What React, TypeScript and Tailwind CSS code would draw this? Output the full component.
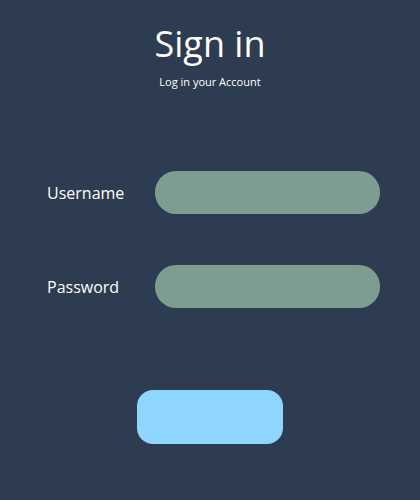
export default function App() {
  return (
    <div className="w-[420px] h-[500px] bg-[#2d3c50] flex flex-col items-center text-white" style={{ fontFamily: '"Open Sans", sans-serif' }}>
      <h1 className="mt-[20px] text-[36px] leading-[48px] font-normal">Sign in</h1>
      <p className="mt-[6px] text-[11px] leading-[15px]">Log in your Account</p>
      <div className="mt-[82px] w-full flex flex-col gap-[51px]">
        <div className="flex items-center pl-[47px] pr-[40px]">
          <span className="w-[108px] text-[16px]">Username</span>
          <input className="w-[225px] h-[43px] rounded-[21px] bg-[#7f9c90] outline-none" />
        </div>
        <div className="flex items-center pl-[47px] pr-[40px]">
          <span className="w-[108px] text-[16px]">Password</span>
          <input type="password" className="w-[225px] h-[43px] rounded-[21px] bg-[#7f9c90] outline-none" />
        </div>
      </div>
      <button className="mt-[82px] w-[146px] h-[54px] rounded-[16px] bg-[#8fd6ff]"></button>
    </div>
  );
}
